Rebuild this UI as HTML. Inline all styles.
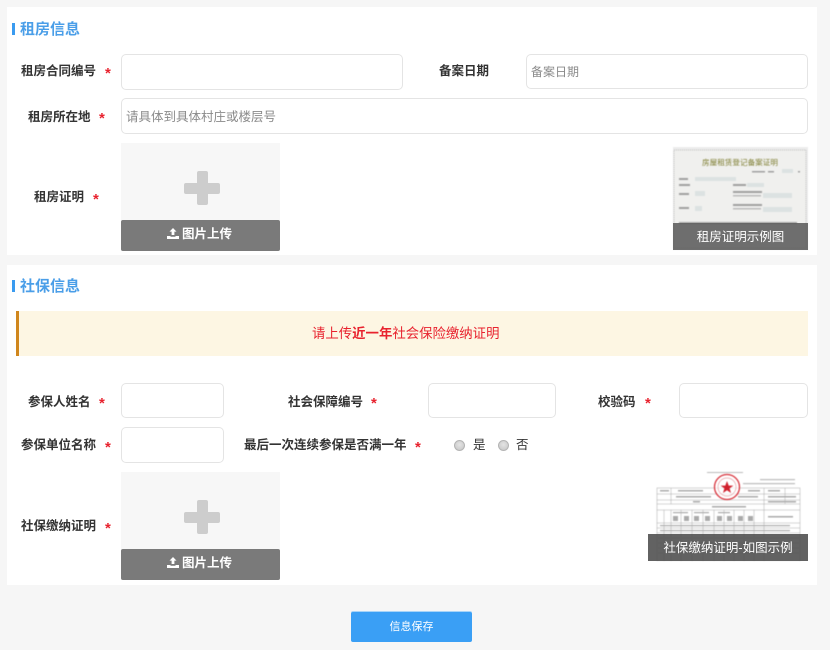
<!DOCTYPE html>
<html lang="zh-CN">
<head>
<meta charset="utf-8">
<title>租房信息</title>
<style>
*{box-sizing:border-box}
html,body{margin:0;padding:0}
body{width:830px;height:650px;position:relative;overflow:hidden;background:#f6f6f6;font-family:"Liberation Sans","Noto Sans CJK SC",sans-serif;color:#333}
.a{position:absolute}
.panel{position:absolute;left:7px;width:810px;background:#fff}
.title{position:absolute;left:20px;font-size:15px;line-height:20px;font-weight:bold;color:#4a9ee8;white-space:nowrap}
.bar{position:absolute;left:12px;width:3px;height:12px;background:#3a9bf0}
.lb{position:absolute;font-size:12.5px;line-height:18px;font-weight:bold;color:#333;white-space:nowrap}
.st{position:absolute;font-size:15px;line-height:18px;color:#e8222e;font-weight:bold}
.in{position:absolute;background:#fff;border:1px solid #e4e4e4;border-radius:5px;font-size:12.5px;color:#8a8a8a;padding-left:4px;white-space:nowrap}
.up{position:absolute;left:121px;width:159px;height:108px;background:#f7f7f7}
.pv{position:absolute;left:76px;top:28px;width:11px;height:34px;background:#cdcdcd;border-radius:2px}
.ph{position:absolute;left:63px;top:40px;width:36px;height:11px;background:#cdcdcd;border-radius:2px}
.ub{position:absolute;left:0;bottom:0;width:159px;height:31px;background:#7a7a7a;border-radius:2px;color:#fff;font-size:12.5px;font-weight:bold;line-height:29px;text-align:center;padding-right:2px}
.ub svg{vertical-align:-1px;margin-right:3px}
.ex{position:absolute;color:#fff;text-align:center;font-size:12.5px;white-space:nowrap}
.radio{position:absolute;width:11px;height:11px;border-radius:50%;background:radial-gradient(circle at 50% 40%,#e4e4e4,#c4c4c4);border:1px solid #b4b4b4}
.soft{filter:blur(.4px)}
</style>
</head>
<body>
<div class="panel" style="top:7px;height:248px"></div>
<div class="panel" style="top:265px;height:320px"></div>

<div class="bar" style="top:23px"></div>
<div class="title" style="top:20px">租房信息</div>

<div class="lb" style="left:21px;top:62px">租房合同编号</div><div class="st" style="left:105px;top:65px">*</div>
<div class="in" style="left:121px;top:54px;width:282px;height:36px"></div>
<div class="lb" style="left:439px;top:62px">备案日期</div>
<div class="in" style="left:526px;top:54px;width:282px;height:35px;line-height:35px;font-size:12px">备案日期</div>

<div class="lb" style="left:28px;top:108px">租房所在地</div><div class="st" style="left:99px;top:110px">*</div>
<div class="in" style="left:121px;top:98px;width:687px;height:36px;line-height:37px">请具体到具体村庄或楼层号</div>

<div class="lb" style="left:34px;top:188px">租房证明</div><div class="st" style="left:93px;top:191px">*</div>
<div class="up" style="top:143px"><div class="pv"></div><div class="ph"></div>
<div class="ub"><svg width="12" height="11" viewBox="0 0 12 11"><path d="M6 0L9.5 3.6H7.4V7H4.6V3.6H2.5ZM0 8H3.5V8.8H8.5V8H12V11H0Z" fill="#fff"/></svg>图片上传</div></div>

<svg class="a soft" style="left:673px;top:147px" width="135" height="103" viewBox="0 0 135 103">
<rect width="135" height="103" fill="#ececec"/>
<rect x="1" y="3" width="132" height="98" fill="#f0f0ee" stroke="#bdbdbd" stroke-dasharray="1 1"/>
<text x="67" y="18" font-size="7.6" fill="#7d7d30" text-anchor="middle" font-family="Liberation Sans,Noto Sans CJK SC,sans-serif">房屋租赁登记备案证明</text>
<g fill="#dce2e2">
<rect x="109" y="22" width="11" height="4"/>
<rect x="22" y="30" width="41" height="4"/>
<rect x="74" y="36" width="17" height="4"/>
<rect x="22" y="44" width="10" height="5"/>
<rect x="90" y="46" width="29" height="5"/>
<rect x="22" y="59" width="7" height="5"/>
<rect x="90" y="60" width="29" height="5"/>
</g>
<g fill="#a0a0a0">
<rect x="79" y="24" width="13" height="1.5"/><rect x="95" y="24" width="6" height="1.5"/><rect x="125" y="24" width="2" height="1.5"/>
<rect x="6" y="31" width="9" height="2"/>
<rect x="6" y="37" width="11" height="2"/><rect x="60" y="37" width="13" height="2"/>
<rect x="6" y="46" width="10" height="2"/>
<rect x="60" y="44" width="29" height="2"/><rect x="60" y="48" width="28" height="1.5" fill="#bbb"/>
<rect x="6" y="60" width="10" height="2"/>
<rect x="60" y="57" width="29" height="2"/><rect x="60" y="61" width="28" height="1.5" fill="#bbb"/>
<rect x="6" y="75" width="118" height="2"/>
</g>
</svg>
<div class="ex" style="left:673px;top:223px;width:135px;height:27px;line-height:28px;background:rgba(95,95,95,.9)">租房证明示例图</div>

<div class="bar" style="top:280px"></div>
<div class="title" style="top:277px">社保信息</div>

<div class="a" style="left:16px;top:311px;width:792px;height:45px;background:#fdf6e3;border-left:3px solid #d0861c;padding-left:293px;color:#e8222e;font-size:13.4px;line-height:46px;white-space:nowrap">请上传<b>近一年</b>社会保险缴纳证明</div>

<div class="lb" style="left:28px;top:393px">参保人姓名</div><div class="st" style="left:99px;top:395px">*</div>
<div class="in" style="left:121px;top:383px;width:103px;height:35px"></div>
<div class="lb" style="left:288px;top:393px">社会保障编号</div><div class="st" style="left:371px;top:395px">*</div>
<div class="in" style="left:428px;top:383px;width:128px;height:35px"></div>
<div class="lb" style="left:598px;top:393px">校验码</div><div class="st" style="left:645px;top:395px">*</div>
<div class="in" style="left:679px;top:383px;width:129px;height:35px"></div>

<div class="lb" style="left:21px;top:436px">参保单位名称</div><div class="st" style="left:105px;top:439px">*</div>
<div class="in" style="left:121px;top:427px;width:103px;height:36px"></div>
<div class="lb" style="left:244px;top:436px">最后一次连续参保是否满一年</div><div class="st" style="left:415px;top:439px">*</div>
<div class="radio" style="left:454px;top:440px"></div>
<div class="a" style="left:473px;top:436px;font-size:12.5px;line-height:18px">是</div>
<div class="radio" style="left:498px;top:440px"></div>
<div class="a" style="left:516px;top:436px;font-size:12.5px;line-height:18px">否</div>

<div class="lb" style="left:21px;top:517px">社保缴纳证明</div><div class="st" style="left:105px;top:520px">*</div>
<div class="up" style="top:472px"><div class="pv"></div><div class="ph"></div>
<div class="ub"><svg width="12" height="11" viewBox="0 0 12 11"><path d="M6 0L9.5 3.6H7.4V7H4.6V3.6H2.5ZM0 8H3.5V8.8H8.5V8H12V11H0Z" fill="#fff"/></svg>图片上传</div></div>

<svg class="a soft" style="left:648px;top:470px" width="160" height="91" viewBox="0 0 160 91">
<g fill="#bbb">
<rect x="59" y="2" width="36" height="1"/>
<rect x="112" y="9" width="35" height="1.2"/><rect x="95" y="13" width="52" height="1.2"/>
</g>
<g fill="none" stroke="#aaa" stroke-width=".5">
<rect x="9" y="18" width="143" height="73"/>
<path d="M9 24H152M9 30H152M9 34H152M9 40H152M9 53H152M9 58H152M9 63H152M9 68H152M9 73H152M9 78H152M9 83H152"/>
<path d="M16 40V91M23 18V34M23 40V91M33 40V91M44 40V91M55 40V91M66 40V91M76 40V91M86 40V91M96 40V91M106 40V91M116 18V91M137 18V34"/>
</g>
<g fill="#aaa">
<rect x="12" y="20" width="9" height="1.5"/><rect x="30" y="20" width="25" height="1.5"/><rect x="100" y="20" width="12" height="1.5"/><rect x="120" y="20" width="12" height="1.5"/>
<rect x="28" y="26" width="35" height="1.5"/><rect x="90" y="26" width="20" height="1.5"/><rect x="120" y="26" width="28" height="1.5"/>
<rect x="45" y="31" width="7" height="1.5"/><rect x="120" y="31" width="28" height="1.5"/>
<rect x="64" y="36" width="34" height="1.5"/>
<rect x="25" y="42" width="15" height="1.2"/><rect x="46" y="42" width="15" height="1.2"/><rect x="70" y="42" width="12" height="1.2"/>
<rect x="25" y="46" width="5" height="5"/><rect x="36" y="46" width="5" height="5"/><rect x="46" y="46" width="5" height="5"/><rect x="57" y="46" width="5" height="5"/><rect x="69" y="46" width="5" height="5"/><rect x="79" y="46" width="5" height="5"/>
<rect x="90" y="46" width="5" height="5"/><rect x="100" y="46" width="5" height="5"/><rect x="120" y="46" width="25" height="1.5"/>
<rect x="12" y="55" width="130" height="1.2"/>
<rect x="12" y="60" width="130" height="1.2"/>
</g>
<circle cx="79" cy="17" r="12.5" fill="#fff" fill-opacity=".7" stroke="#d8323c" stroke-width="1.3"/>
<circle cx="79" cy="17" r="9" fill="none" stroke="#e8a0a5" stroke-width=".7"/>
<path d="M79 11L80.7 15.6H85.4L81.6 18.4L83 23L79 20.2L75 23L76.4 18.4L72.6 15.6H77.3Z" fill="#d01f2c"/>
</svg>
<div class="ex" style="left:648px;top:534px;width:160px;height:27px;line-height:29px;background:rgba(85,85,85,.92)">社保缴纳证明-如图示例</div>

<div class="a" style="left:351px;top:612px;width:121px;height:30px;background:#3a9ff5;border-radius:2px;color:#fff;font-size:11px;line-height:31px;text-align:center;box-shadow:0 -1px 0 #a8d4f8">信息保存</div>
</body>
</html>
